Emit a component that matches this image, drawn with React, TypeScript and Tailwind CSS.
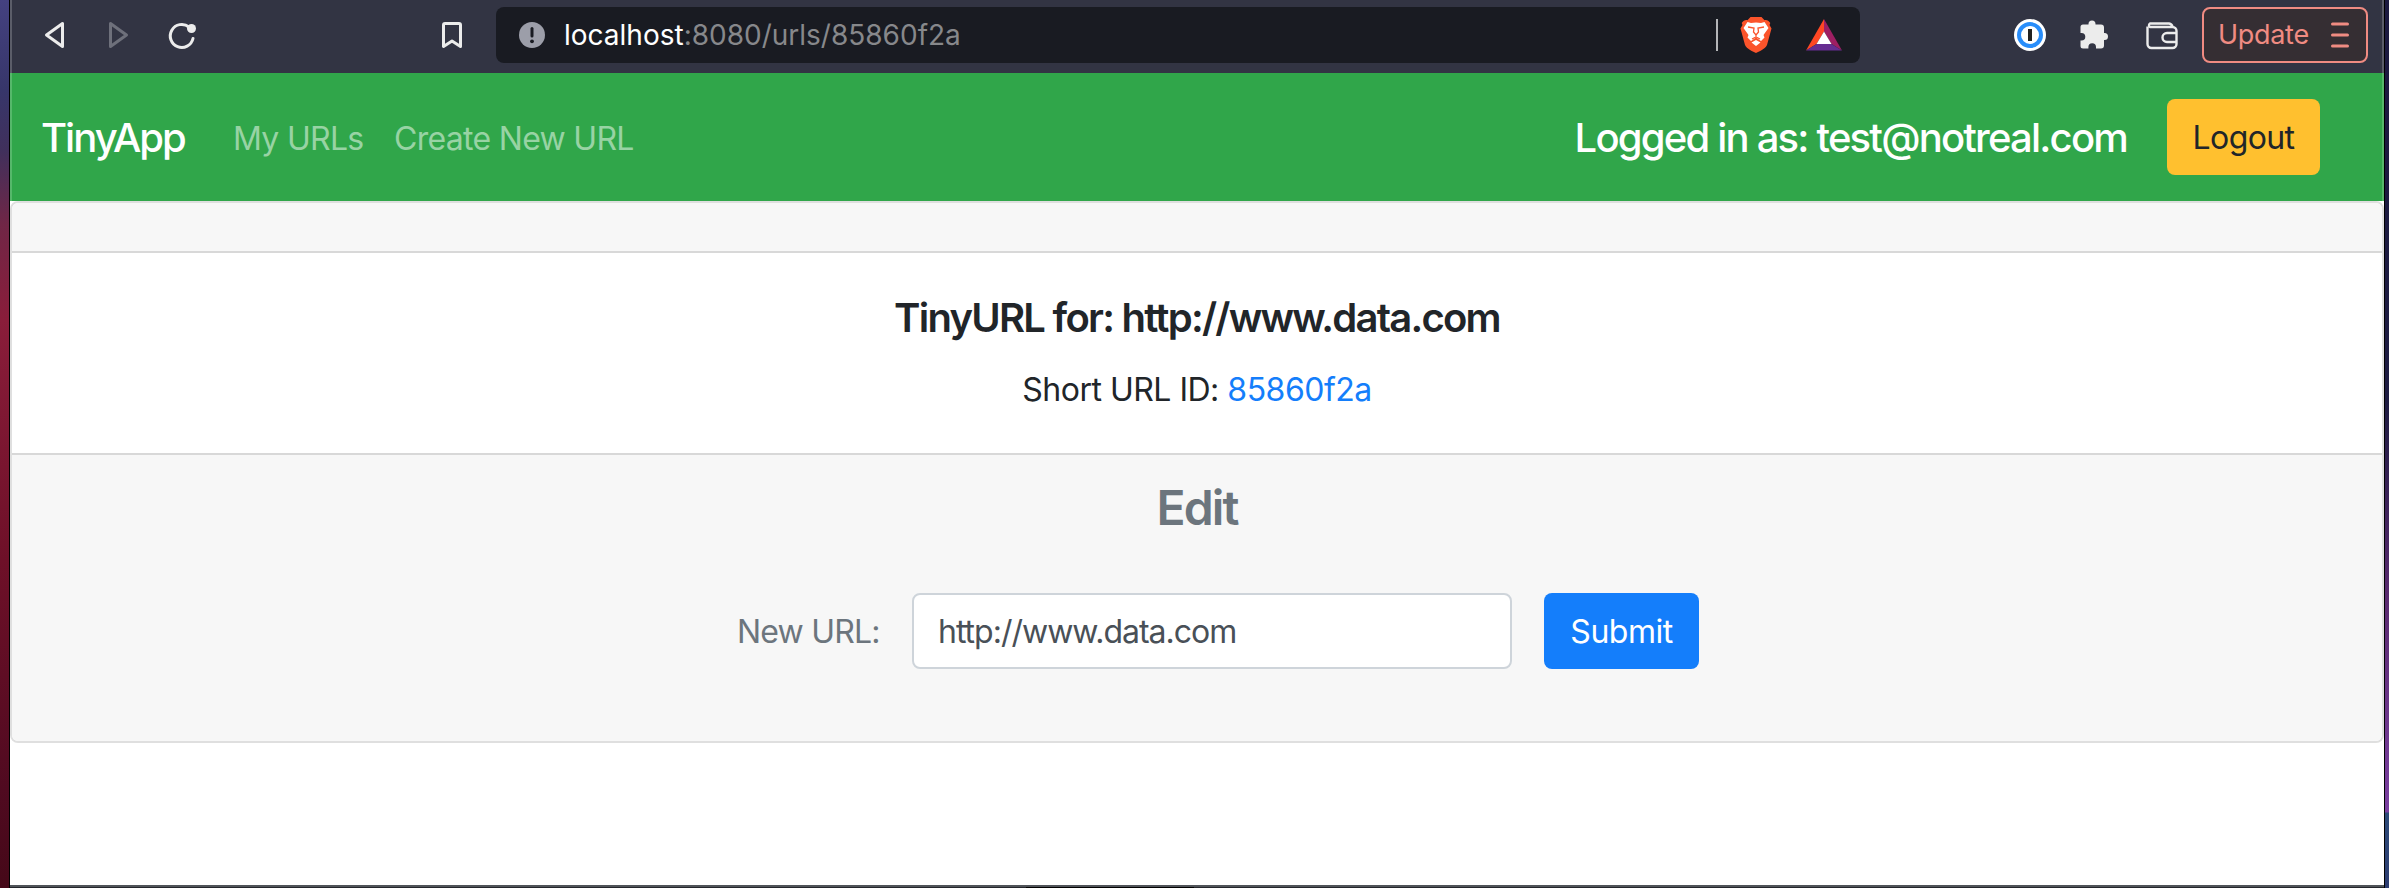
import React from "react";

function Toolbar() {
  return (
    <div className="flex h-[73px] items-start bg-[#323443] shrink-0 border-x-2 border-[#5b5d69] text-[#ececec]">
      <svg className="mt-[18px] ml-[30px] h-[34px] w-[160px]" viewBox="42 18 160 34" fill="none" strokeLinejoin="round" strokeLinecap="round" strokeWidth="3">
        <path d="M62.5 23.5V46.5L46.5 35Z" stroke="#ececec" />
        <path d="M110.500 23.500V46.500L126.500 35Z" stroke="#6e707b" />
        <path d="M189 27A11.500 11.500 0 1 0 193 38.500" stroke="#ececec" />
        <circle cx="191.500" cy="28.500" r="4.500" fill="#ececec" />
      </svg>
      <svg className="mt-[18px] ml-[236px] h-[34px] w-[30px]" viewBox="438 18 30 34" fill="none" stroke="#ececec" strokeWidth="3" strokeLinejoin="round">
        <path d="M443.500 25a1.500 1.500 0 0 1 1.500 -1.500h14a1.500 1.500 0 0 1 1.500 1.500V46.500L452 41L443.500 46.500Z" />
      </svg>
      <div className="mt-[7px] ml-[28px] flex h-14 w-[1364px] items-center rounded-lg bg-[#191b22]">
        <svg className="ml-[23px] h-[26px] w-[26px]" viewBox="0 0 26 26">
          <circle cx="13" cy="13" r="13" fill="#9c9ea9" />
          <path d="M13 6.500V14" stroke="#191b22" strokeWidth="3" strokeLinecap="round" />
          <circle cx="13" cy="19.300" r="1.900" fill="#191b22" />
        </svg>
        <span className="ml-[19px] w-[1152px] whitespace-nowrap text-[28px] tracking-[0px] text-[#87888b]">
          <span className="text-white">localhost</span>:8080/urls/85860f2a
        </span>
        <div className="h-8 w-[2px] bg-[#b4b5b8]" />
        <svg className="ml-[22px] h-9 w-8" viewBox="0 0 32 36">
          <path d="M10.500 0H21.500L24.500 3.200C27 2.700 28.600 3.800 30.300 6L29.500 8L31.500 11.500L27 28C25 32 20 34 16 36C12 34 7 32 5 28L.500 11.500L2.500 8L1.700 6C3.400 3.800 5 2.700 7.500 3.200Z" fill="#fb542b" />
          <path d="M16 5.500L21 6L24.500 5L28.500 11L23.500 18L24.500 20.500L21 24L16 20.500L11 24L7.500 20.500L8.500 18L3.500 11L7.500 5L11 6ZM16 23L20.500 25.500L16 29L11.500 25.500Z" fill="#fff" />
          <path d="M8 10L14 11L13.500 15L16 18L18.500 15L18 11L24 10M16 18V20.500M12 22L16 20L20 22" stroke="#fb542b" strokeWidth="1.300" fill="none" />
        </svg>
        <svg className="ml-[34px] h-8 w-9" viewBox="0 0 36 32">
          <path d="M18 0L0 31.500L10.500 25L18 12.500Z" fill="#ff4724" />
          <path d="M18 0L36 31.500L25.500 25L18 12.500Z" fill="#9e1f63" />
          <path d="M0 31.500H36L25.500 25H10.500Z" fill="#662d91" />
          <path d="M18 12.500L25.500 25H10.500Z" fill="#fff" />
        </svg>
      </div>
      <svg className="mt-[19px] ml-[154px] h-8 w-8" viewBox="0 0 32 32">
        <circle cx="16" cy="16" r="16" fill="#fff" />
        <circle cx="16" cy="16" r="11" fill="none" stroke="#288dfa" strokeWidth="4" />
        <rect x="14" y="10" width="4" height="12" fill="#222" />
      </svg>
      <svg className="mt-[20px] ml-[34px] h-[29px] w-[29px]" viewBox="0 0 29 29" fill="#ececec">
        <path d="M8.500 4.500V4a3.500 3.500 0 0 1 7 0V4.500H21a3 3 0 0 1 3 3V13h.500a3.500 3.500 0 0 1 0 7H24v5.500a3 3 0 0 1 -3 3H16V27a3.800 3.800 0 0 0 -7.600 0V28.500H3a2.500 2.500 0 0 1 -2.500 -2.500V20.500H1.500a3.800 3.800 0 0 0 0 -7.600H.500V7a2.500 2.500 0 0 1 2.500 -2.500Z" />
      </svg>
      <svg className="mt-[22px] ml-[37px] h-7 w-8" viewBox="0 0 32 28" fill="none" stroke="#ececec" strokeWidth="2.400">
        <path d="M1.500 4.500V22a4 4 0 0 0 4 4H26.500a4 4 0 0 0 4 -4V9a4 4 0 0 0 -4 -4H4a2 2 0 0 1 0 -3.500H23a4 4 0 0 1 3.500 3.500M30.500 11H21a4.500 4.500 0 0 0 0 9H30.500" />
      </svg>
      <div className="mt-[7px] ml-[24px] flex h-14 w-[166px] items-center rounded-lg border-2 border-[#f08b82] bg-[#352e33] pl-[14px]">
        <span className="w-[113px] whitespace-nowrap pt-px text-[27px] tracking-[-0.3px] text-[#f08b82]">Update</span>
        <svg className="h-[26px] w-[18px]" viewBox="0 0 18 26" stroke="#f08b82" strokeWidth="3" strokeLinecap="round">
          <path d="M1.500 2H16.500M1.500 13H16.500M1.500 24H16.500" />
        </svg>
      </div>
    </div>
  );
}

function Navbar() {
  return (
    <nav className="flex h-32 shrink-0 items-center border-x-2 border-[#56b86b] bg-[#30a64a] pt-0.5 pl-[29px] text-[32px] text-[#98d3a4]">
      <a className="w-[192px] whitespace-nowrap text-[40px] font-medium tracking-[-2px] text-white">TinyApp</a>
      <a className="w-[161px] whitespace-nowrap pt-0.5 tracking-[-0.7px]">My URLs</a>
      <a className="whitespace-nowrap pt-0.5 tracking-[-0.7px]">Create New URL</a>
      <span className="ml-auto whitespace-nowrap text-[40px] font-medium tracking-[-1.8px] text-white">Logged in as: test@notreal.com</span>
      <button className="mr-[62px] mb-0.5 ml-10 h-[76px] w-[153px] rounded-lg bg-[#ffc02f] pt-px tracking-[-0.6px] text-[#212529]">Logout</button>
    </nav>
  );
}

export default function App() {
  return (
    <div className="flex h-[888px] w-[2389px] overflow-hidden bg-black font-['Inter',sans-serif]">
      <div className="w-[9px] bg-[linear-gradient(#444180_0px,#37366a_90px,#40305c_150px,#702646_225px,#8a1d3a_320px,#6e1028_560px,#500a20_790px,#450818_888px)]" />
      <div className="ml-px flex w-[2374px] flex-col bg-white">
        <Toolbar />
        <Navbar />
        <main className="h-[684px] shrink-0 bg-white">
          <section className="flex h-[542px] flex-col overflow-hidden rounded-lg border-2 border-[#dfdfdf] bg-white text-center">
            <div className="h-[50px] shrink-0 border-b-2 border-[#d8d8d8] bg-[#f7f7f7]" />
            <div className="h-[200px] shrink-0 pt-[41px] text-[#212529]">
              <h5 className="text-[40px] leading-[48px] font-semibold tracking-[-1.75px]">TinyURL for: http://www.data.com</h5>
              <p className="mt-[24px] text-[32px] leading-[48px] tracking-[-0.5px]">
                Short URL ID: <a className="text-[#147efb]">85860f2a</a>
              </p>
            </div>
            <div className="flex-1 border-t-2 border-[#d8d8d8] bg-[#f7f7f7] pt-[24px] text-[#6c757d]">
              <h2 className="text-[48px] leading-[58px] font-semibold tracking-[-1.9px]">Edit</h2>
              <form className="mt-[56px] ml-[725px] flex h-[76px] items-center text-left text-[32px] tracking-[-0.5px]">
                <label className="w-[175px] whitespace-nowrap pt-0.5 tracking-[-0.8px]">New URL:</label>
                <input className="h-[76px] w-[600px] rounded-lg border-2 border-[#ced4da] bg-white px-6 tracking-[-1px] text-[#495057]" defaultValue="http://www.data.com" />
                <button type="button" className="ml-8 h-[76px] w-[155px] rounded-lg bg-[#147efb] pt-0.5 text-white">Submit</button>
              </form>
            </div>
          </section>
        </main>
        <div className="h-[2px] shrink-0 bg-[#505459]" />
        <div className="flex h-px shrink-0 bg-[#24262b]">
          <div className="ml-[1016px] h-px w-[168px] bg-black" />
        </div>
      </div>
      <div className="ml-px w-[4px] bg-[linear-gradient(#1c1a40_0px,#1c1a40_400px,#5a2a70_600px,#7a3fa0_812px,#2c4a78_813px,#2c3c70_888px)]" />
    </div>
  );
}
